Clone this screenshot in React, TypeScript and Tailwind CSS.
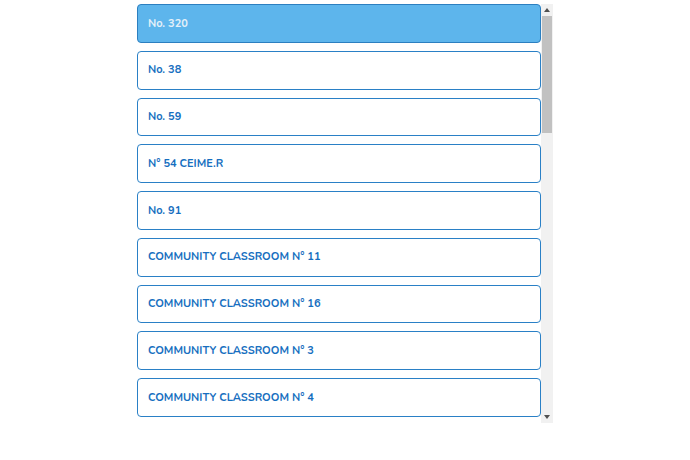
const items = [
  "No. 320",
  "No. 38",
  "No. 59",
  "N° 54 CEIME.R",
  "No. 91",
  "COMMUNITY CLASSROOM N° 11",
  "COMMUNITY CLASSROOM N° 16",
  "COMMUNITY CLASSROOM N° 3",
  "COMMUNITY CLASSROOM N° 4",
];

function ScrollBar() {
  return (
    <div className="w-[12px] h-full flex flex-col bg-[#f1f1f1]">
      <div className="h-[12px] flex items-center justify-center">
        <div className="w-0 h-0 border-x-[3px] border-x-transparent border-b-[4px] border-b-[#505050]" />
      </div>
      <div className="flex-1 px-[1px]">
        <div className="h-[117px] bg-[#c1c1c1]" />
      </div>
      <div className="h-[12px] flex items-center justify-center">
        <div className="w-0 h-0 border-x-[3px] border-x-transparent border-t-[4px] border-t-[#505050]" />
      </div>
    </div>
  );
}

export default function App() {
  const selected = 0;

  return (
    <div className="w-full h-[460px] bg-white pt-1" style={{ fontFamily: "Nunito, Lato, 'Open Sans', sans-serif" }}>
      <div className="mx-auto w-[416px] h-[419px] flex">
        <div className="flex-1 overflow-hidden flex flex-col gap-2">
          {items.map((name, i) => (
            <div
              key={name}
              className={`h-[38.75px] shrink-0 flex items-center pl-[10px] pt-[1px] rounded border text-[11px] font-bold ${
                i === selected
                  ? "bg-[#5db5ec] border-[#2c7fc0] text-[#e4f0f9]"
                  : "bg-white border-[#2a80c6] text-[#176fc0]"
              }`}
            >
              {name}
            </div>
          ))}
        </div>
        <ScrollBar />
      </div>
    </div>
  );
}
